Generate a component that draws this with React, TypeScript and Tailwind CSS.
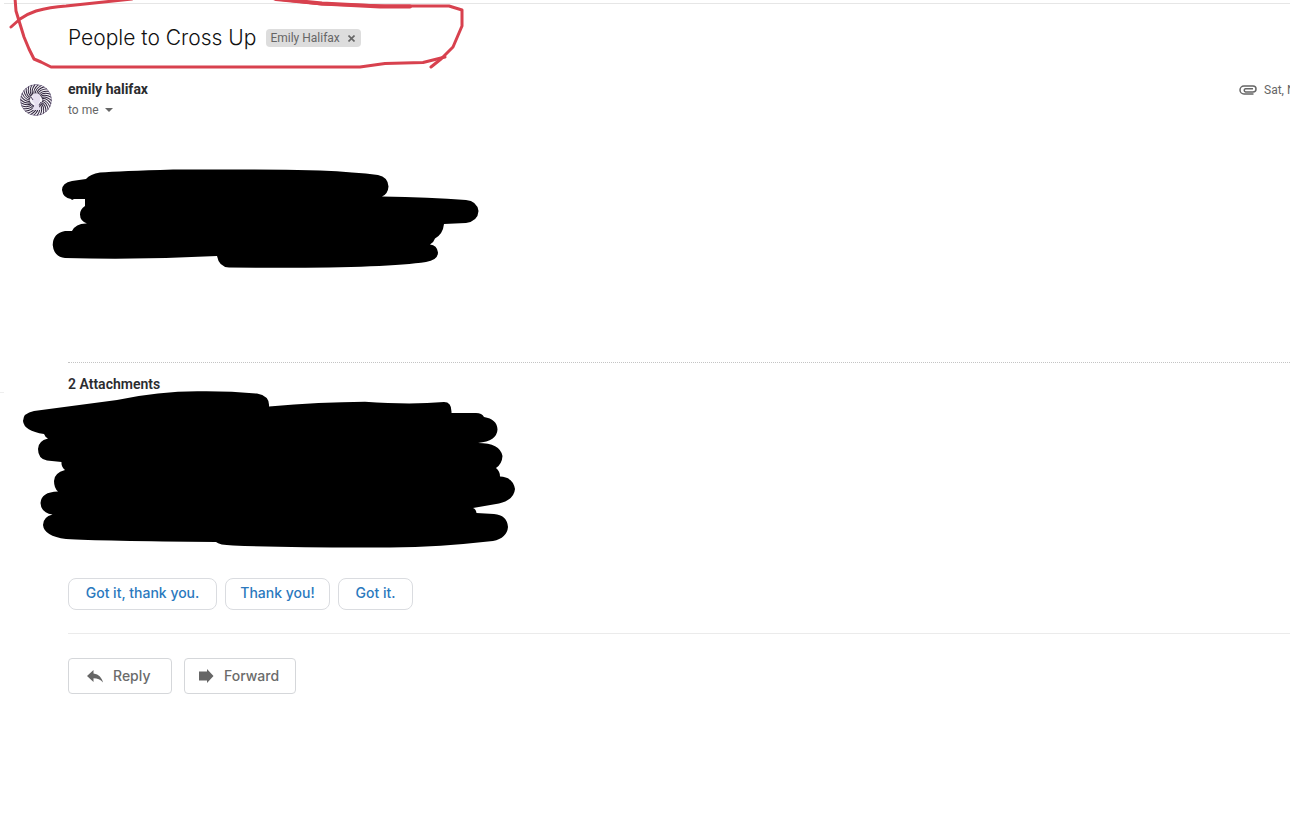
import React, { useState } from "react";

const inkColor = "#d8414e";

// Freehand red circle around the subject line
function RedMarker() {
  return (
    <svg
      className="pointer-events-none absolute left-0 top-0"
      width="480"
      height="76"
      viewBox="0 0 480 76"
      fill="none"
      stroke={inkColor}
      strokeWidth="3"
      strokeLinecap="round"
      strokeLinejoin="round"
      aria-hidden="true"
    >
      <path d="M15 -2L16 11L20 24L24 37L29 49L34 59L41 62L51 67H360L385 63.500L423 62.500L445 57" />
      <path d="M11 27L20 19Q27 14 36 11Q50 7 66 6L132 -1" />
      <path d="M268 -2L322 4L385 6L449 6L462 10V26L453 47L441 59L431 67" />
      <path d="M276 -1L322 3.500L380 6.500H410" strokeWidth="4" />
    </svg>
  );
}

function BodyScribble() {
  return (
    <svg
      className="-ml-4 block"
      width="428"
      height="100"
      viewBox="52 168 428 100"
      aria-hidden="true"
    >
      <path d="M86 179L72 181Q62 183 62 190Q63 198 71 199L72 200L74 199H85V206Q80 209 80 214.500Q80 221 87 223.500Q76 223 72 231H65Q53 233 52.700 245Q54 257 65 258Q140 260 217 256Q219 267 229 267.500Q380 269 426 262Q438 260 438 252.500Q437 245 430 244.500Q434 242 435 238.500Q443 234 444 224L466 223Q478 221 478.500 211Q477 201 466 200Q430 197 382 196.500Q388 194 388.500 186.500Q388 177 378 175Q355 172 320 170.500Q240 169 173 169.500Q120 171 100 172.500Q90 174 86 179Z" />
    </svg>
  );
}

function AttachmentsScribble() {
  return (
    <svg
      className="-ml-[46px] block"
      width="494"
      height="158"
      viewBox="22 391 494 158"
      aria-hidden="true"
    >
      <path d="M117 400L34 411Q23 413 23 421Q24 431 44 434Q45 437 48 438.500Q38 441 38 449Q38 459 47 460.500L61.500 462Q61 467 65 470Q54 473 54 481Q54 488 58 491.500Q41 492 40.500 503Q41 513 52.500 514.500Q43 517 43 525Q44 536 66 539Q100 541 216 542Q219 545 233 545.500Q300 548 390 547.500Q440 547 493 541Q507 538 508 527Q507 515 494 514L476.500 513Q476 509 473 508L499 503.500Q514 500 515 489Q513 477 500 476.500Q500 471 496 468Q502 464 502.500 456Q500 443 478 443Q497 441 497.500 429.500Q497 419 484 417Q482 413 476 413H451.500Q452 402 444 402Q410 405 365 401.700Q320 402 269 406.500Q270 396 257 393.500Q230 391 200 391.300Q160 391 117 400Z" />
    </svg>
  );
}

function Avatar() {
  const spokes = Array.from({ length: 30 }, (_, i) => i * 12);
  return (
    <svg className="size-8 shrink-0" viewBox="-16 -16 32 32" role="img" aria-label="emily halifax">
      <clipPath id="avatar-clip">
        <circle r="16" />
      </clipPath>
      <g clipPath="url(#avatar-clip)">
        <circle r="16" fill="#f6f4f9" />
        {spokes.map((angle) => (
          <path
            key={angle}
            d="M6 0Q11 0 14 7"
            transform={`rotate(${angle})`}
            fill="none"
            stroke="#30263d"
            strokeWidth="1"
          />
        ))}
        {/* pale figure in the middle of the swirl */}
        <path d="M-3 -6Q1 -8 4 -5L4 1L2 4L5 10L-4 10L-1 4L-4 1Z" fill="#e6dff0" />
        <path d="M-5 -3L-3 0M-5 4L-2 6M5 2L3 5" stroke="#4c3e60" fill="none" />
        <circle r="15.500" fill="none" stroke="#6b5e7e" strokeWidth="0.700" />
      </g>
    </svg>
  );
}

function ClipIcon() {
  return (
    <svg width="18" height="10" viewBox="0 0 18 10" fill="none" stroke="#666" strokeWidth="1.500" aria-hidden="true">
      <path d="M14.500 9H5A4 4 0 0 1 5 1H14A3 3 0 0 1 14 7H6.500A1.700 1.700 0 0 1 6.500 3.700H14" />
    </svg>
  );
}

function ReplyIcon() {
  return (
    <svg width="16" height="13" viewBox="0 0 16 13" fill="#666" aria-hidden="true">
      <path d="M6.500 3.500V0L0 6L6.500 12V8.300C10.500 8.300 13.500 9.500 16 12.500C15 8 12 4.300 6.500 3.500Z" />
    </svg>
  );
}

function ForwardIcon() {
  return (
    <svg width="15" height="14" viewBox="0 0 15 14" fill="#666" aria-hidden="true">
      <path d="M0 2.500H8V0L14.500 7L8 14V11.500H0Z" />
    </svg>
  );
}

const quickReplies = [
  { text: "Got it, thank you.", width: "w-[149px]" },
  { text: "Thank you!", width: "w-[105px]" },
  { text: "Got it.", width: "w-[75px]" },
];

export default function App() {
  const [labelled, setLabelled] = useState(true);

  return (
    <div className="relative min-h-screen overflow-hidden bg-white font-[Roboto,sans-serif] text-[#2b2c2f]">
      <div className="ml-1 mt-[3px] border-t border-[#e6e6e6]" />
      <div className="absolute left-0 top-[392px] w-1 border-t border-[#eeeeee]" />

      <header className="flex h-[68px] items-center gap-[10px] pl-[68px]">
        <h1 className="font-[Inter,sans-serif] text-[21px] font-light leading-7 text-[#111111]">
          People to Cross Up
        </h1>
        {labelled && (
          <span className="flex h-[18px] items-center gap-[6px] rounded-sm bg-[#dddddd] pl-1 pr-[3px] text-xs text-[#666666]">
            Emily Halifax
            <button
              type="button"
              aria-label="Remove label Emily Halifax"
              onClick={() => setLabelled(false)}
              className="flex h-4 w-3 items-center justify-center"
            >
              <svg width="7" height="7" viewBox="0 0 7 7" stroke="#666" strokeWidth="1.600" aria-hidden="true">
                <path d="M0.500 0.500L6.500 6.500M6.500 0.500L0.500 6.500" />
              </svg>
            </button>
          </span>
        )}
      </header>

      <main>
        {/* sender */}
        <div className="flex gap-4 pl-5 pt-[7px]">
          <div className="pt-[5px]">
            <Avatar />
          </div>
          <div className="grow">
            <div className="text-sm font-bold leading-5">emily halifax</div>
            <button type="button" className="flex items-center gap-[6px] text-xs leading-[22px] text-[#666666]">
              to me
              <svg width="8" height="4" viewBox="0 0 8 4" fill="#666" aria-hidden="true">
                <path d="M0 0H8L4 4Z" />
              </svg>
            </button>
          </div>
          {/* the date runs on past the window edge */}
          <div className="flex h-[22px] w-[51px] shrink-0 items-center gap-[7px] overflow-hidden whitespace-nowrap text-xs text-[#666666]">
            <span className="shrink-0">
              <ClipIcon />
            </span>
            <span>Sat, N</span>
          </div>
        </div>

        {/* message */}
        <div className="pl-[68px]">
          <div className="pb-[94px] pt-[47px]">
            <BodyScribble />
          </div>

          <section className="border-t border-dotted border-[#c4c4c4] pt-[11px]">
            <h2 className="h-[17px] text-sm font-semibold leading-5">2 Attachments</h2>
            <AttachmentsScribble />
          </section>

          <div className="flex gap-2 pb-[23px] pt-[29px]">
            {quickReplies.map((reply) => (
              <button
                key={reply.text}
                type="button"
                className={`${reply.width} h-8 rounded-lg border border-[#dadce0] pb-[2px] font-[Inter,sans-serif] text-sm font-medium text-[#2b79be]`}
              >
                {reply.text}
              </button>
            ))}
          </div>

          <div className="flex gap-3 border-t border-[#ebebeb] pt-6">
            <button
              type="button"
              className="flex h-9 w-[104px] items-center gap-[10px] rounded border border-[#d5d7da] pl-[18px] font-[Inter,sans-serif] text-sm font-medium text-[#6b6b6b]"
            >
              <ReplyIcon />
              Reply
            </button>
            <button
              type="button"
              className="flex h-9 w-28 items-center gap-[10px] rounded border border-[#d5d7da] pl-[14px] font-[Inter,sans-serif] text-sm font-medium text-[#6b6b6b]"
            >
              <ForwardIcon />
              Forward
            </button>
          </div>
        </div>
      </main>

      <RedMarker />
    </div>
  );
}
